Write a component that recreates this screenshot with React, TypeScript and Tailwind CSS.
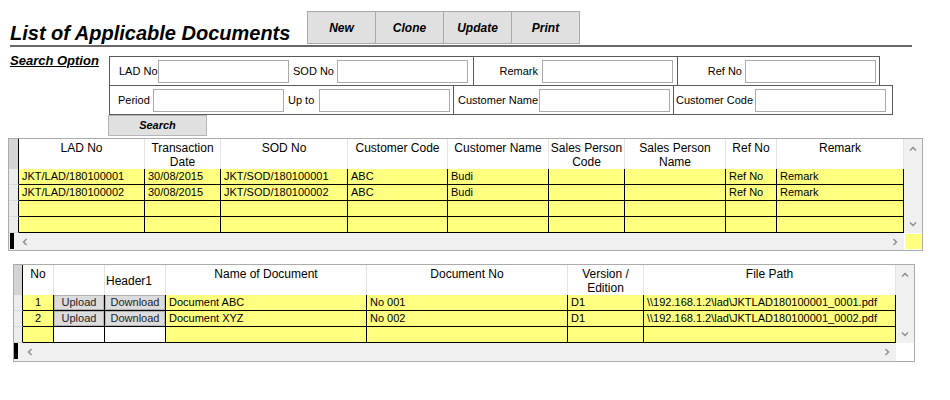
import React from 'react'

const topCols = 'grid grid-cols-[10px_126px_76px_127px_100px_101px_76px_101px_51px_127px]'
const bottomCols = 'grid grid-cols-[9px_31px_51px_61px_201px_201px_76px_252px]'

const topRows = [
  ['JKT/LAD/180100001', '30/08/2015', 'JKT/SOD/180100001', 'ABC', 'Budi', '', '', 'Ref No', 'Remark'],
  ['JKT/LAD/180100002', '30/08/2015', 'JKT/SOD/180100002', 'ABC', 'Budi', '', '', 'Ref No', 'Remark'],
  ['', '', '', '', '', '', '', '', ''],
  ['', '', '', '', '', '', '', '', ''],
]

const docRows = [
  { no: '1', name: 'Document ABC', docNo: 'No 001', version: 'D1', path: '\\\\192.168.1.2\\lad\\JKTLAD180100001_0001.pdf' },
  { no: '2', name: 'Document XYZ', docNo: 'No 002', version: 'D1', path: '\\\\192.168.1.2\\lad\\JKTLAD180100001_0002.pdf' },
]

function Chevron({ dir }: { dir: 'up' | 'down' | 'left' | 'right' }) {
  const d = {
    up: 'M1 5.5 L4 2.5 L7 5.5',
    down: 'M1 2.5 L4 5.5 L7 2.5',
    left: 'M5.5 1 L2.5 4 L5.5 7',
    right: 'M2.5 1 L5.5 4 L2.5 7',
  }[dir]
  return (
    <svg width="8" height="8" viewBox="0 0 8 8" className="block">
      <path d={d} fill="none" stroke="#8a8a8a" strokeWidth="1.4" />
    </svg>
  )
}

function Field() {
  return <input readOnly className="h-[23px] w-[131px] shrink-0 border border-[#ababab] bg-white" />
}

function ToolButton({ label, first }: { label: string; first?: boolean }) {
  return (
    <div
      className={`flex h-[33px] w-[69px] items-center justify-center border border-[#a9a9a9] bg-[#e0e0e0] text-[12px] font-bold italic ${first ? '' : '-ml-px'}`}
    >
      {label}
    </div>
  )
}

function CellButton({ label }: { label: string }) {
  return (
    <div className="h-full border-r border-b border-black">
      <div className="flex h-full items-center justify-center border border-[#b4b4b4] bg-[#dcdcdc] text-[11px] leading-[13px] text-[#222]">
        {label}
      </div>
    </div>
  )
}

export default function App() {
  return (
    <div className="h-[400px] w-[950px] overflow-hidden bg-white font-['Liberation_Sans',Arial,sans-serif] text-black">
      {/* title + toolbar */}
      <div className="flex pt-[11px]">
        <div className="flex h-[33px] w-[307px] items-end pb-[1px] pl-[10px]">
          <h1 className="text-[20px] font-bold italic leading-[20px]">List of Applicable Documents</h1>
        </div>
        <div className="flex">
          <ToolButton label="New" first />
          <ToolButton label="Clone" />
          <ToolButton label="Update" />
          <ToolButton label="Print" />
        </div>
      </div>
      <div className="ml-[10px] mt-[1px] h-[2px] w-[902px] bg-[#686868]" />

      {/* search option */}
      <div className="mt-[9px] flex">
        <div className="w-[109px] pl-[10px]">
          <span className="-mt-[3px] block text-[13px] font-bold italic leading-[15px] underline">Search Option</span>
        </div>
        <div className="text-[11px]">
          <div className="flex h-[30px]">
            <div className="flex w-[365px] items-center border border-[#5a5a5a] pl-[9px]">
              <span className="w-[39px]">LAD No</span>
              <Field />
              <span className="w-[48px] pr-[3px] text-right">SOD No</span>
              <Field />
            </div>
            <div className="-ml-px flex w-[205px] items-center border border-[#5a5a5a]">
              <span className="w-[68px] pr-[4px] text-right">Remark</span>
              <Field />
            </div>
            <div className="-ml-px flex w-[203px] items-center border border-[#5a5a5a]">
              <span className="w-[67px] pr-[3px] text-right">Ref No</span>
              <Field />
            </div>
          </div>
          <div className="-mt-px flex h-[30px]">
            <div className="flex w-[345px] items-center border border-[#5a5a5a] pl-[8px]">
              <span className="w-[35px]">Period</span>
              <Field />
              <span className="w-[35px] pl-[4px]">Up to</span>
              <Field />
            </div>
            <div className="-ml-px flex w-[221px] items-center border border-[#5a5a5a]">
              <span className="w-[85px] whitespace-nowrap pl-[4px]">Customer Name</span>
              <Field />
            </div>
            <div className="-ml-px flex w-[220px] items-center border border-[#5a5a5a]">
              <span className="w-[81px] whitespace-nowrap pl-[2px]">Customer Code</span>
              <Field />
            </div>
          </div>
          <div className="-ml-px flex h-[21px] w-[99px] items-center justify-center border border-[#b5b5b5] bg-[#e0e0e0] text-[11px] font-bold italic">
            Search
          </div>
        </div>
      </div>

      {/* LAD list grid */}
      <div className="ml-[8px] mt-[2px] w-[915px] border border-[#ababab] bg-white">
        <div className="flex">
          <div className="w-[895px]">
            <div className={`${topCols} h-[30px] text-[12px] leading-[14px]`}>
              <div className="border-r border-b border-black bg-[#d4d4d4]" />
              <div className="border-r border-b border-[#e3e3e3] border-b-black pt-[2px] text-center">LAD No</div>
              <div className="border-r border-b border-[#e3e3e3] border-b-black pt-[2px] text-center">Transaction Date</div>
              <div className="border-r border-b border-[#e3e3e3] border-b-black pt-[2px] text-center">SOD No</div>
              <div className="border-r border-b border-[#e3e3e3] border-b-black pt-[2px] text-center">Customer Code</div>
              <div className="border-r border-b border-[#e3e3e3] border-b-black pt-[2px] text-center">Customer Name</div>
              <div className="border-r border-b border-[#e3e3e3] border-b-black pt-[2px] text-center">Sales Person Code</div>
              <div className="border-r border-b border-[#e3e3e3] border-b-black pt-[2px] text-center">Sales Person Name</div>
              <div className="border-r border-b border-[#e3e3e3] border-b-black pt-[2px] text-center">Ref No</div>
              <div className="border-r border-b border-[#e3e3e3] border-b-black pt-[2px] text-center">Remark</div>
            </div>
            {topRows.map((row, i) => (
              <div key={i} className={`${topCols} h-[16px] text-[11px] leading-[15px]`}>
                <div className="border-r border-b border-r-black border-b-[#d8d8d8] bg-[#ececec]" />
                {row.map((cell, j) => (
                  <div key={j} className="overflow-hidden whitespace-nowrap border-r border-b border-black bg-[#ffff80] pl-[3px]">
                    {cell}
                  </div>
                ))}
              </div>
            ))}
          </div>
          <div className="flex w-[18px] flex-col items-center justify-between bg-[#f0f0f0] pb-[5px] pt-[6px]">
            <Chevron dir="up" />
            <Chevron dir="down" />
          </div>
        </div>
        <div className="flex h-[17px]">
          <div className="flex w-[895px] items-center bg-[#f0f0f0]">
            <div className="ml-[1px] h-[16px] w-[4px] self-start bg-black" />
            <div className="ml-[7px]">
              <Chevron dir="left" />
            </div>
            <div className="ml-auto mr-[5px]">
              <Chevron dir="right" />
            </div>
          </div>
          <div className="w-[18px] pl-[1px] pt-[1px]">
            <div className="h-[15px] w-[17px] bg-[#ffff80]" />
          </div>
        </div>
      </div>

      {/* documents grid */}
      <div className="ml-[13px] mt-[13px] w-[902px] border border-[#ababab] bg-white">
        <div className="flex">
          <div className="w-[882px]">
            <div className={`${bottomCols} h-[30px] text-[12px] leading-[14px]`}>
              <div className="border-r border-b border-black bg-[#d4d4d4]" />
              <div className="border-r border-b border-[#e3e3e3] border-b-black pt-[2px] text-center">No</div>
              <div className="border-r border-b border-[#e3e3e3] border-b-black" />
              <div className="flex items-center border-r border-b border-[#e3e3e3] border-b-black pl-[1px] pt-[2px]">Header1</div>
              <div className="border-r border-b border-[#e3e3e3] border-b-black pt-[2px] text-center">Name of Document</div>
              <div className="border-r border-b border-[#e3e3e3] border-b-black pt-[2px] text-center">Document No</div>
              <div className="border-r border-b border-[#e3e3e3] border-b-black pt-[2px] text-center">Version / Edition</div>
              <div className="border-r border-b border-[#e3e3e3] border-b-black pt-[2px] text-center">File Path</div>
            </div>
            {docRows.map((row) => (
              <div key={row.no} className={`${bottomCols} h-[16px] text-[11px] leading-[15px]`}>
                <div className="border-r border-b border-r-black border-b-[#d8d8d8] bg-[#ececec]" />
                <div className="border-r border-b border-black bg-[#ffff80] text-center">{row.no}</div>
                <CellButton label="Upload" />
                <CellButton label="Download" />
                <div className="overflow-hidden whitespace-nowrap border-r border-b border-black bg-[#ffff80] pl-[3px]">{row.name}</div>
                <div className="overflow-hidden whitespace-nowrap border-r border-b border-black bg-[#ffff80] pl-[3px]">{row.docNo}</div>
                <div className="overflow-hidden whitespace-nowrap border-r border-b border-black bg-[#ffff80] pl-[3px]">{row.version}</div>
                <div className="overflow-hidden whitespace-nowrap border-r border-b border-black bg-[#ffff80] pl-[3px]">{row.path}</div>
              </div>
            ))}
            <div className={`${bottomCols} h-[16px]`}>
              <div className="border-r border-b border-r-black border-b-[#d8d8d8] bg-[#ececec]" />
              <div className="border-r border-b border-black bg-[#ffff80]" />
              <div className="border-r border-b border-black bg-white" />
              <div className="border-r border-b border-black bg-white" />
              <div className="border-r border-b border-black bg-[#ffff80]" />
              <div className="border-r border-b border-black bg-[#ffff80]" />
              <div className="border-r border-b border-black bg-[#ffff80]" />
              <div className="border-r border-b border-black bg-[#ffff80]" />
            </div>
          </div>
          <div className="flex w-[18px] flex-col items-center justify-between bg-[#f0f0f0] pb-[5px] pt-[6px]">
            <Chevron dir="up" />
            <Chevron dir="down" />
          </div>
        </div>
        <div className="flex h-[18px]">
          <div className="flex w-[882px] items-center bg-[#f0f0f0]">
            <div className="h-[16px] w-[4px] self-start bg-black" />
            <div className="ml-[8px]">
              <Chevron dir="left" />
            </div>
            <div className="ml-auto mr-[5px]">
              <Chevron dir="right" />
            </div>
          </div>
          <div className="w-[18px] bg-white" />
        </div>
      </div>
    </div>
  )
}
